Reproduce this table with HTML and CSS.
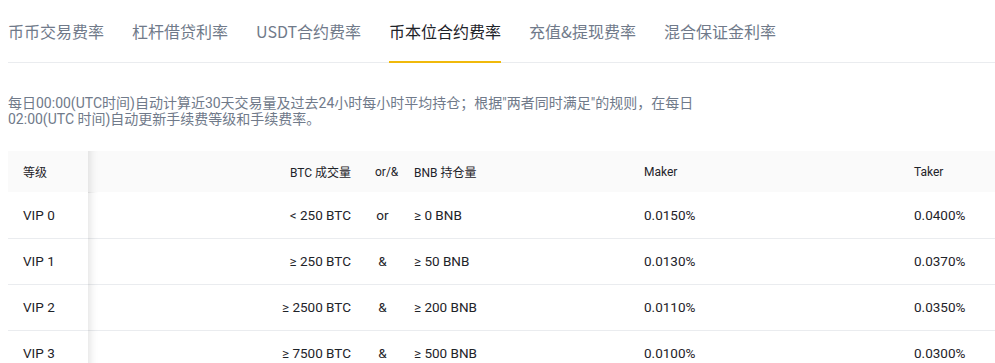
FILE: index.html
```html
<html>
    <head>
        <title>费率</title>
        <link rel="stylesheet" href="styles.css">
    </head>
    <body>
        <div class="tabs">
            <div class="tab">币币交易费率</div>
            <div class="tab">杠杆借贷利率</div>
            <div class="tab">USDT合约费率</div>
            <div class="tab activo">币本位合约费率</div>
            <div class="tab">充值&amp;提现费率</div>
            <div class="tab">混合保证金利率</div>
        </div>
        <p class="aviso">每日00:00(UTC时间)自动计算近30天交易量及过去24小时每小时平均持仓；根据"两者同时满足"的规则，在每日<br>02:00(UTC 时间)自动更新手续费等级和手续费率。</p>
        <table class="tabla">
            <colgroup>
                <col style="width: 80px">
                <col style="width: 275px">
                <col style="width: 39px">
                <col style="width: 230px">
                <col style="width: 270px">
                <col>
            </colgroup>
            <thead>
                <tr>
                    <th class="nivel">等级</th>
                    <th class="der">BTC 成交量</th>
                    <th class="centro">or/&amp;</th>
                    <th>BNB 持仓量</th>
                    <th>Maker</th>
                    <th>Taker</th>
                </tr>
            </thead>
            <tbody>
                <tr>
                    <td class="nivel">VIP 0</td>
                    <td class="der">&lt; 250 BTC</td>
                    <td class="centro">or</td>
                    <td>≥ 0 BNB</td>
                    <td>0.0150%</td>
                    <td>0.0400%</td>
                </tr>
                <tr>
                    <td class="nivel">VIP 1</td>
                    <td class="der">≥ 250 BTC</td>
                    <td class="centro">&amp;</td>
                    <td>≥ 50 BNB</td>
                    <td>0.0130%</td>
                    <td>0.0370%</td>
                </tr>
                <tr>
                    <td class="nivel">VIP 2</td>
                    <td class="der">≥ 2500 BTC</td>
                    <td class="centro">&amp;</td>
                    <td>≥ 200 BNB</td>
                    <td>0.0110%</td>
                    <td>0.0350%</td>
                </tr>
                <tr>
                    <td class="nivel">VIP 3</td>
                    <td class="der">≥ 7500 BTC</td>
                    <td class="centro">&amp;</td>
                    <td>≥ 500 BNB</td>
                    <td>0.0100%</td>
                    <td>0.0300%</td>
                </tr>
            </tbody>
        </table>
    </body>
</html>
```

FILE: styles.css
```css
html{
    background-color: #ffffff;
}
body{
    margin: 0 0 0 8px;
    overflow: hidden;
    font-family: Roboto, "Noto Sans CJK SC", sans-serif;
    color: #1e2329;
}
.tabs{
    display: flex;
    gap: 28px;
    border-bottom: 1px solid #eaecef;
    font-family: "Noto Sans CJK SC", sans-serif;
}
.tab{
    padding: 20px 0 19px;
    font-size: 16px;
    line-height: 22px;
    color: #707a8a;
    border-bottom: 2px solid transparent;
    margin-bottom: -1px;
}
.tab.activo{
    color: #1e2329;
    border-bottom-color: #f0b90b;
}
.aviso{
    margin: 32px 0 24px;
    font-size: 14px;
    line-height: 16px;
    color: #707a8a;
}
.tabla{
    width: 100%;
    table-layout: fixed;
    border-collapse: collapse;
}
.tabla th{
    height: 41px;
    padding: 0 12px;
    background-color: #fafafa;
    font-size: 12px;
    font-weight: normal;
    text-align: left;
    color: #1e2329;
}
.tabla td{
    height: 46px;
    padding: 0 12px;
    border-bottom: 1px solid #eaecef;
    font-size: 13.5px;
    color: #1e2329;
}
.tabla .nivel{
    position: sticky;
    left: 0;
    padding-left: 15px;
}
.tabla td.nivel{
    background-color: #ffffff;
}
.tabla .nivel::after{
    content: "";
    position: absolute;
    top: 0;
    bottom: -1px;
    right: 0;
    width: 10px;
    transform: translateX(100%);
    box-shadow: inset 10px 0 8px -8px rgba(0, 0, 0, 0.12);
}
.der{
    text-align: right !important;
}
.centro{
    text-align: center !important;
}
```
